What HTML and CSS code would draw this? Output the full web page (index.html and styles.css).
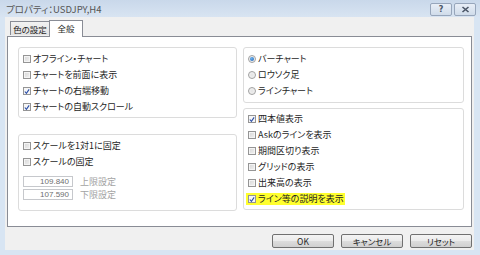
FILE: index.html
```html
<!DOCTYPE html>
<html lang="ja">
<head>
<meta charset="utf-8">
<link rel="stylesheet" href="styles.css">
</head>
<body>
<div class="window">
  <div class="titlebar">
    <span class="title">プロパティ：USDJPY,H4</span>
    <div class="tbtns">
      <span class="tbtn">?</span>
      <span class="tbtn"><svg width="9" height="7" viewBox="0 0 9 7"><path d="M1.5 1 L7.5 6 M7.5 1 L1.5 6" stroke="#4a5566" stroke-width="1.6" fill="none"/></svg></span>
    </div>
  </div>
  <div class="client">
    <div class="tabs">
      <div class="tab">色の設定</div>
      <div class="tab active">全般</div>
    </div>
    <div class="panel">
      <div class="col">
        <div class="group g-l1">
          <div class="row"><span class="cb"></span><span class="lbl">オフライン・チャート</span></div>
          <div class="row"><span class="cb"></span><span class="lbl">チャートを前面に表示</span></div>
          <div class="row"><span class="cb on"><svg width="7" height="7" viewBox="0 0 7 7"><path d="M1 3.5 L2.8 5.6 L6 1" stroke="#2a4ea8" stroke-width="1.3" fill="none"/></svg></span><span class="lbl">チャートの右端移動</span></div>
          <div class="row"><span class="cb on"><svg width="7" height="7" viewBox="0 0 7 7"><path d="M1 3.5 L2.8 5.6 L6 1" stroke="#2a4ea8" stroke-width="1.3" fill="none"/></svg></span><span class="lbl">チャートの自動スクロール</span></div>
        </div>
        <div class="group g-l2">
          <div class="row"><span class="cb"></span><span class="lbl">スケールを1対1に固定</span></div>
          <div class="row"><span class="cb"></span><span class="lbl">スケールの固定</span></div>
          <div class="inrow first"><span class="num">109.840</span><span class="dis">上限設定</span></div>
          <div class="inrow"><span class="num">107.590</span><span class="dis">下限設定</span></div>
        </div>
      </div>
      <div class="col right">
        <div class="group g-r1">
          <div class="row"><span class="rb on"></span><span class="lbl">バーチャート</span></div>
          <div class="row"><span class="rb"></span><span class="lbl">ロウソク足</span></div>
          <div class="row"><span class="rb"></span><span class="lbl">ラインチャート</span></div>
        </div>
        <div class="group g-r2">
          <div class="row"><span class="cb on"><svg width="7" height="7" viewBox="0 0 7 7"><path d="M1 3.5 L2.8 5.6 L6 1" stroke="#2a4ea8" stroke-width="1.3" fill="none"/></svg></span><span class="lbl">四本値表示</span></div>
          <div class="row"><span class="cb"></span><span class="lbl">Askのラインを表示</span></div>
          <div class="row"><span class="cb"></span><span class="lbl">期間区切り表示</span></div>
          <div class="row"><span class="cb"></span><span class="lbl">グリッドの表示</span></div>
          <div class="row"><span class="cb"></span><span class="lbl">出来高の表示</span></div>
          <div class="row"><span class="hl"><span class="cb on"><svg width="7" height="7" viewBox="0 0 7 7"><path d="M1 3.5 L2.8 5.6 L6 1" stroke="#2a4ea8" stroke-width="1.3" fill="none"/></svg></span><span class="lbl">ライン等の説明を表示</span></span></div>
        </div>
      </div>
    </div>
    <div class="buttons">
      <span class="btn">OK</span>
      <span class="btn">キャンセル</span>
      <span class="btn">リセット</span>
    </div>
  </div>
</div>
</body>
</html>
```
FILE: styles.css
```css
html, body {
  margin: 0;
  padding: 0;
}
body {
  font-family: "Noto Sans CJK JP", "Noto Sans", sans-serif;
  font-size: 8.5px;
  color: #1e1e1e;
  font-feature-settings: "palt";
}
.window {
  width: 480px;
  height: 255px;
  background: #d8e5f3;
  display: flex;
  flex-direction: column;
  overflow: hidden;
}
.titlebar {
  height: 17px;
  display: flex;
  align-items: center;
  padding-left: 6px;
  padding-right: 4px;
  background: linear-gradient(#c9d8ea, #d8e4f2);
}
.title {
  font-size: 9.5px;
  color: #555555;
}
.tbtns {
  margin-left: auto;
  display: flex;
  gap: 2px;
  align-self: flex-start;
  margin-top: 3px;
}
.tbtn {
  width: 20px;
  height: 11px;
  border: 1px solid #97a6bb;
  border-radius: 2px;
  background: linear-gradient(#e8eef7, #d0dcea);
  display: flex;
  align-items: center;
  justify-content: center;
  font-family: "DejaVu Sans", sans-serif;
  font-size: 8px;
  font-weight: bold;
  color: #4a5566;
}
.client {
  flex: 1;
  margin: 0 6px 5px 5px;
  background: #f0f0f0;
  padding: 3px 2px 0 2px;
  display: flex;
  flex-direction: column;
}
.tabs {
  display: flex;
  height: 16px;
  flex: none;
  align-items: flex-end;
  padding-left: 3px;
  position: relative;
  z-index: 1;
}
.tab {
  box-sizing: border-box;
  height: 14px;
  width: 40px;
  margin-bottom: 1px;
  border: 1px solid #898c95;
  border-bottom: none;
  background: linear-gradient(#f2f2f2, #e2e2e2);
  display: flex;
  align-items: center;
  justify-content: center;
  white-space: nowrap;
  line-height: 12px;
}
.tab.active {
  height: 17px;
  width: 34px;
  margin-bottom: -1px;
  margin-left: -1px;
  background: #ffffff;
  align-items: flex-start;
  padding-top: 1px;
}
.panel {
  height: 191px;
  flex: none;
  box-sizing: border-box;
  border: 1px solid #898c95;
  background: #ffffff;
  display: grid;
  grid-template-columns: 219px 221px;
  column-gap: 6px;
  padding: 10px 0 0 10px;
  align-content: start;
}
.col {
  display: flex;
  flex-direction: column;
  gap: 16px;
}
.col.right {
  gap: 5px;
}
.group {
  border: 1px solid #dcdcdc;
  border-radius: 3px;
  padding: 3px 4px 2px 4px;
  box-sizing: border-box;
}
.g-l1 { height: 71px; }
.g-l2 { height: 77px; }
.g-r1 { height: 56px; padding-top: 3px; }
.g-r2 { height: 102px; padding-top: 2px; }
.row {
  height: 16px;
  display: flex;
  align-items: center;
}
.lbl {
  margin-left: 2px;
  white-space: nowrap;
  font-size: 9px;
  line-height: 12px;
}
.cb {
  width: 8px;
  height: 8px;
  box-sizing: border-box;
  border: 1px solid #959595;
  background: linear-gradient(135deg, #d6d6d6, #f2f2f2);
  box-shadow: inset 0 0 0 1px #f4f4f4;
  display: flex;
  align-items: center;
  justify-content: center;
  flex: none;
}
.cb.on {
  background: #f6f6f6;
  box-shadow: none;
}
.rb {
  width: 8px;
  height: 8px;
  box-sizing: border-box;
  border: 1px solid #a0a0a0;
  border-radius: 50%;
  background: radial-gradient(circle, #e4e4e4 0, #f6f6f6 100%);
  flex: none;
  display: flex;
  align-items: center;
  justify-content: center;
}
.rb.on::after {
  content: "";
  width: 4px;
  height: 4px;
  border-radius: 50%;
  background: radial-gradient(circle at 40% 35%, #6cb4f0, #1d5fb3);
}
.hl {
  display: flex;
  align-items: center;
  background: #ffff2e;
  height: 12px;
  margin-left: -2px;
  padding-left: 2px;
  padding-right: 1px;
}
.inrow {
  display: flex;
  align-items: center;
  height: 11px;
  margin-top: 2px;
}
.inrow.first {
  margin-top: 6px;
}
.num {
  width: 50px;
  height: 11px;
  box-sizing: border-box;
  border: 1px solid #c6c8cc;
  background: #fff;
  color: #6e6e6e;
  text-align: right;
  padding-right: 3px;
  line-height: 9px;
  font-family: "Liberation Sans", sans-serif;
  font-size: 8px;
}
.dis {
  color: #a3a3a3;
  margin-left: 7px;
  font-size: 9px;
}
.buttons {
  display: flex;
  justify-content: flex-end;
  gap: 7px;
  margin-top: 7px;
}
.btn {
  width: 62px;
  height: 14px;
  box-sizing: border-box;
  border: 1px solid #707070;
  border-radius: 2px;
  background: linear-gradient(#f4f4f4 0, #ebebeb 50%, #dddddd 51%, #cfcfcf 100%);
  display: flex;
  align-items: center;
  justify-content: center;
  font-size: 8.5px;
}
```
